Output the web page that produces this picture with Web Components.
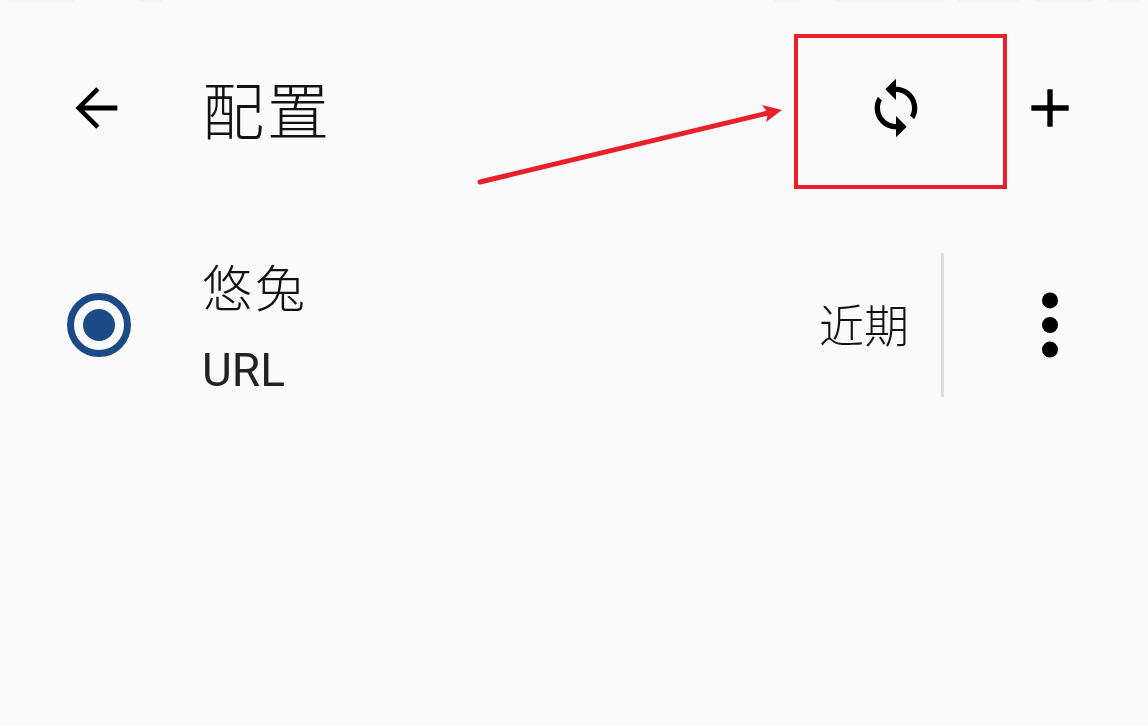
<!DOCTYPE html>
<html lang="zh-CN">
<head>
<meta charset="utf-8">
<title>配置</title>
<style>
  html, body { margin: 0; padding: 0; background: #fafafa; }
  body { width: 1148px; height: 726px; overflow: hidden; font-family: "Noto Sans CJK SC", "Noto Sans", sans-serif; }
</style>
</head>
<body>
<settings-page>
  <status-strip slot="status"></status-strip>
  <app-bar slot="bar" heading="配置">
    <icon-button name="sync" slot="actions"></icon-button>
    <icon-button name="add" slot="actions"></icon-button>
  </app-bar>
  <profile-row slot="list" name="悠兔" kind="URL" updated="近期"></profile-row>
  <sketch-marks slot="marks"></sketch-marks>
</settings-page>

<script>
const ICONS = {
  back: "M20 11.1H7.6l5.7-5.7L12.1 4.2 4.3 12l7.8 7.8 1.2-1.2-5.7-5.7H20v-1.8z",
  sync: "M12 4V1L8 5l4 4V6c3.31 0 6 2.69 6 6 0 1.01-.25 1.97-.7 2.8l1.46 1.46C19.54 15.03 20 13.57 20 12c0-4.42-3.58-8-8-8zm0 14c-3.31 0-6-2.69-6-6 0-1.01.25-1.97.7-2.8L5.24 7.74C4.46 8.97 4 10.43 4 12c0 4.42 3.58 8 8 8v3l4-4-4-4v3z",
  add: "M19 13h-6v6h-2v-6H5v-2h6V5h2v6h6v2z",
  more: "M12-.2a3 3 0 1 0 0 6a3 3 0 1 0 0-6zM12 9a3 3 0 1 0 0 6a3 3 0 1 0 0-6zM12 18.2a3 3 0 1 0 0 6a3 3 0 1 0 0-6z"
};

class IconButton extends HTMLElement {
  constructor() {
    super();
    this.shadowDOM = this.attachShadow({ mode: "open" });
  }

  connectedCallback() {
    this.shadowDOM.innerHTML = `
      <style>
        :host {
          display: block;
          width: 64px;
          height: 64px;
          color: #000;
        }
        svg { display: block; width: 100%; height: 100%; fill: currentColor; overflow: visible; }
      </style>
      <svg viewBox="0 0 24 24"><path d="${ICONS[this.getAttribute("name")]}"></path></svg>
    `;
  }
}

class StatusStrip extends HTMLElement {
  constructor() {
    super();
    this.shadowDOM = this.attachShadow({ mode: "open" });
    this.shadowDOM.innerHTML = `
      <style>
        :host {
          display: flex;
          height: 32px;
          padding: 0 8px;
          box-sizing: border-box;
          justify-content: space-between;
        }
        .side { display: flex; gap: 14px; height: 2px; }
        i { display: block; background: #f5f5f5; }
      </style>
      <div class="side">
        <i style="width:66px"></i><i style="width:24px;margin-left:50px"></i>
      </div>
      <div class="side">
        <i style="width:26px;margin-right:20px"></i><i style="width:110px"></i><i style="width:62px"></i><i style="width:60px"></i><i style="width:32px"></i>
      </div>
    `;
  }
}

class AppBar extends HTMLElement {
  constructor() {
    super();
    this.shadowDOM = this.attachShadow({ mode: "open" });
  }

  connectedCallback() {
    this.shadowDOM.innerHTML = `
      <style>
        :host {
          display: flex;
          align-items: center;
          height: 152px;
          padding: 0 66px 0 64px;
        }
        h1 {
          flex: 1;
          margin: 0 0 0 74px;
          font: 300 62px/76px "Noto Sans CJK SC", sans-serif;
          letter-spacing: 3px;
          color: #111;
        }
        .actions { display: flex; gap: 90px; }
      </style>
      <icon-button name="back"></icon-button>
      <h1>${this.getAttribute("heading")}</h1>
      <div class="actions"><slot name="actions"></slot></div>
    `;
  }
}

class RadioMark extends HTMLElement {
  constructor() {
    super();
    this.shadowDOM = this.attachShadow({ mode: "open" });
    this.shadowDOM.innerHTML = `
      <style>
        :host {
          display: flex;
          align-items: center;
          justify-content: center;
          width: 64px;
          height: 64px;
          box-sizing: border-box;
          border: 7px solid #1c4a86;
          border-radius: 50%;
        }
        span { width: 32px; height: 32px; border-radius: 50%; background: #1c4a86; }
      </style>
      <span></span>
    `;
  }
}

class ProfileRow extends HTMLElement {
  constructor() {
    super();
    this.shadowDOM = this.attachShadow({ mode: "open" });
  }

  connectedCallback() {
    this.shadowDOM.innerHTML = `
      <style>
        :host {
          display: flex;
          align-items: center;
          height: 144px;
          margin-top: 69px;
          padding: 0 66px 0 67px;
          color: #111;
        }
        .texts { flex: 1; margin-left: 71px; }
        .name { font: 300 50px/64px "Noto Sans CJK SC", sans-serif; letter-spacing: 3px; margin-top: -3px; }
        .kind { font: 400 46px/56px Roboto, sans-serif; margin-top: 25px; margin-bottom: -3px; color: #222; }
        .updated { font: 300 45px/56px "Noto Sans CJK SC", sans-serif; margin-top: -2px; margin-left: 2px; }
        .rule { align-self: stretch; width: 3px; margin: 0 74px 0 32px; background: #dedede; }
      </style>
      <radio-mark></radio-mark>
      <div class="texts">
        <div class="name">${this.getAttribute("name")}</div>
        <div class="kind">${this.getAttribute("kind")}</div>
      </div>
      <div class="updated">${this.getAttribute("updated")}</div>
      <div class="rule"></div>
      <icon-button name="more"></icon-button>
    `;
  }
}

// hand drawn red box and arrow lying on top of the screenshot
class SketchMarks extends HTMLElement {
  constructor() {
    super();
    this.shadowDOM = this.attachShadow({ mode: "open" });
    this.shadowDOM.innerHTML = `
      <style>
        :host { position: absolute; inset: 0; pointer-events: none; }
        svg { display: block; width: 100%; height: 100%; }
      </style>
      <svg viewBox="0 0 1148 726">
        <rect x="796" y="36" width="209" height="151" fill="none" stroke="#e8202c" stroke-width="4"></rect>
        <path d="M480 182L768 113" fill="none" stroke="#e8202c" stroke-width="5" stroke-linecap="round"></path>
        <path d="M782 110L762 105L768 113L766 122Z" fill="#e8202c"></path>
      </svg>
    `;
  }
}

class SettingsPage extends HTMLElement {
  constructor() {
    super();
    this.shadowDOM = this.attachShadow({ mode: "open" });
    this.shadowDOM.innerHTML = `
      <style>
        :host {
          display: block;
          position: relative;
          width: 1148px;
          height: 726px;
          background: #fafafa;
          filter: blur(0.5px);
        }
      </style>
      <slot name="status"></slot>
      <slot name="bar"></slot>
      <slot name="list"></slot>
      <slot name="marks"></slot>
    `;
  }
}

customElements.define("icon-button", IconButton);
customElements.define("status-strip", StatusStrip);
customElements.define("app-bar", AppBar);
customElements.define("radio-mark", RadioMark);
customElements.define("profile-row", ProfileRow);
customElements.define("sketch-marks", SketchMarks);
customElements.define("settings-page", SettingsPage);
</script>
</body>
</html>
